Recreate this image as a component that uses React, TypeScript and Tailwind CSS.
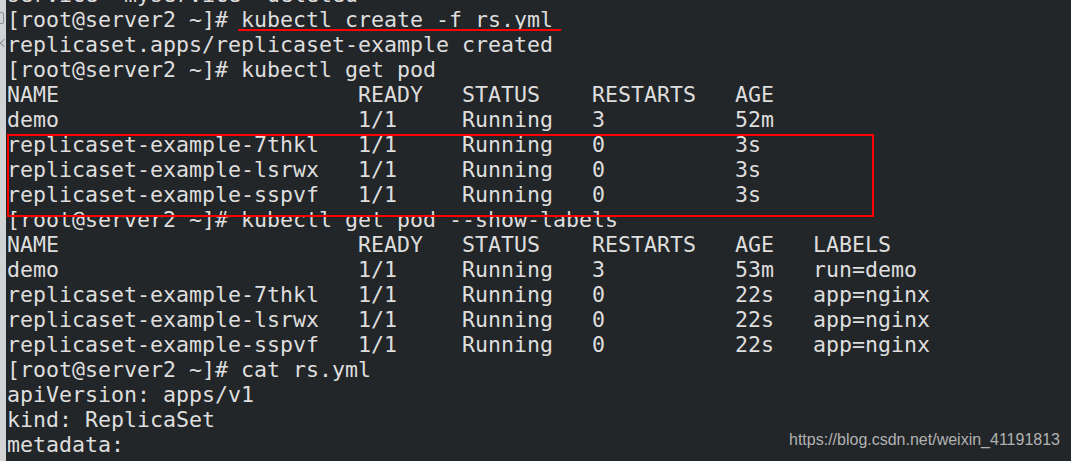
import React from "react";

const widths = [27, 8, 10, 11, 6];
const row = (cells: string[]) =>
  cells.map((c, i) => (i < cells.length - 1 ? c.padEnd(widths[i], " ") : c)).join("");

const lines: string[] = [
  'service "myservice" deleted',
  "[root@server2 ~]# kubectl create -f rs.yml",
  "replicaset.apps/replicaset-example created",
  "[root@server2 ~]# kubectl get pod",
  row(["NAME", "READY", "STATUS", "RESTARTS", "AGE"]),
  row(["demo", "1/1", "Running", "3", "52m"]),
  row(["replicaset-example-7thkl", "1/1", "Running", "0", "3s"]),
  row(["replicaset-example-lsrwx", "1/1", "Running", "0", "3s"]),
  row(["replicaset-example-sspvf", "1/1", "Running", "0", "3s"]),
  "[root@server2 ~]# kubectl get pod --show-labels",
  row(["NAME", "READY", "STATUS", "RESTARTS", "AGE", "LABELS"]),
  row(["demo", "1/1", "Running", "3", "53m", "run=demo"]),
  row(["replicaset-example-7thkl", "1/1", "Running", "0", "22s", "app=nginx"]),
  row(["replicaset-example-lsrwx", "1/1", "Running", "0", "22s", "app=nginx"]),
  row(["replicaset-example-sspvf", "1/1", "Running", "0", "22s", "app=nginx"]),
  "[root@server2 ~]# cat rs.yml",
  "apiVersion: apps/v1",
  "kind: ReplicaSet",
  "metadata:",
  "  name: replicaset-example",
];

export default function App() {
  return (
    <div className="relative flex w-[1071px] h-[461px] overflow-hidden bg-[#232629]">
      <div className="relative w-[6px] shrink-0 bg-[#d2d3d4]">
        <div className="absolute left-[-4px] top-[12px] w-[8px] h-[12px] rounded-[2px] border border-[#8a8c8e]" />
        <div className="absolute left-[1px] top-[40px] w-[6px] h-[6px] rotate-45 border-l border-b border-[#8a8c8e]" />
      </div>
      <div
        className="flex-1 pl-[1px] mt-[-18.5px] text-[#dedede] text-[21.6px] leading-[25px] whitespace-pre"
        style={{ fontFamily: '"DejaVu Sans Mono", monospace' }}
      >
        {lines.map((l, i) => (
          <div key={i} className="h-[25px]">
            {l}
          </div>
        ))}
      </div>
      <div className="absolute left-[238px] top-[29px] w-[323px] h-[2px] bg-[#ff0000]" />
      <div className="absolute left-[7px] top-[134px] w-[867px] h-[83px] border-2 border-[#ff0000]" />
      <div
        className="absolute left-[789px] top-[430px] text-[16px] leading-[20px] text-[#b2b2b2]"
        style={{ fontFamily: '"Liberation Sans", Arial, sans-serif' }}
      >
        https://blog.csdn.net/weixin_41191813
      </div>
    </div>
  );
}
